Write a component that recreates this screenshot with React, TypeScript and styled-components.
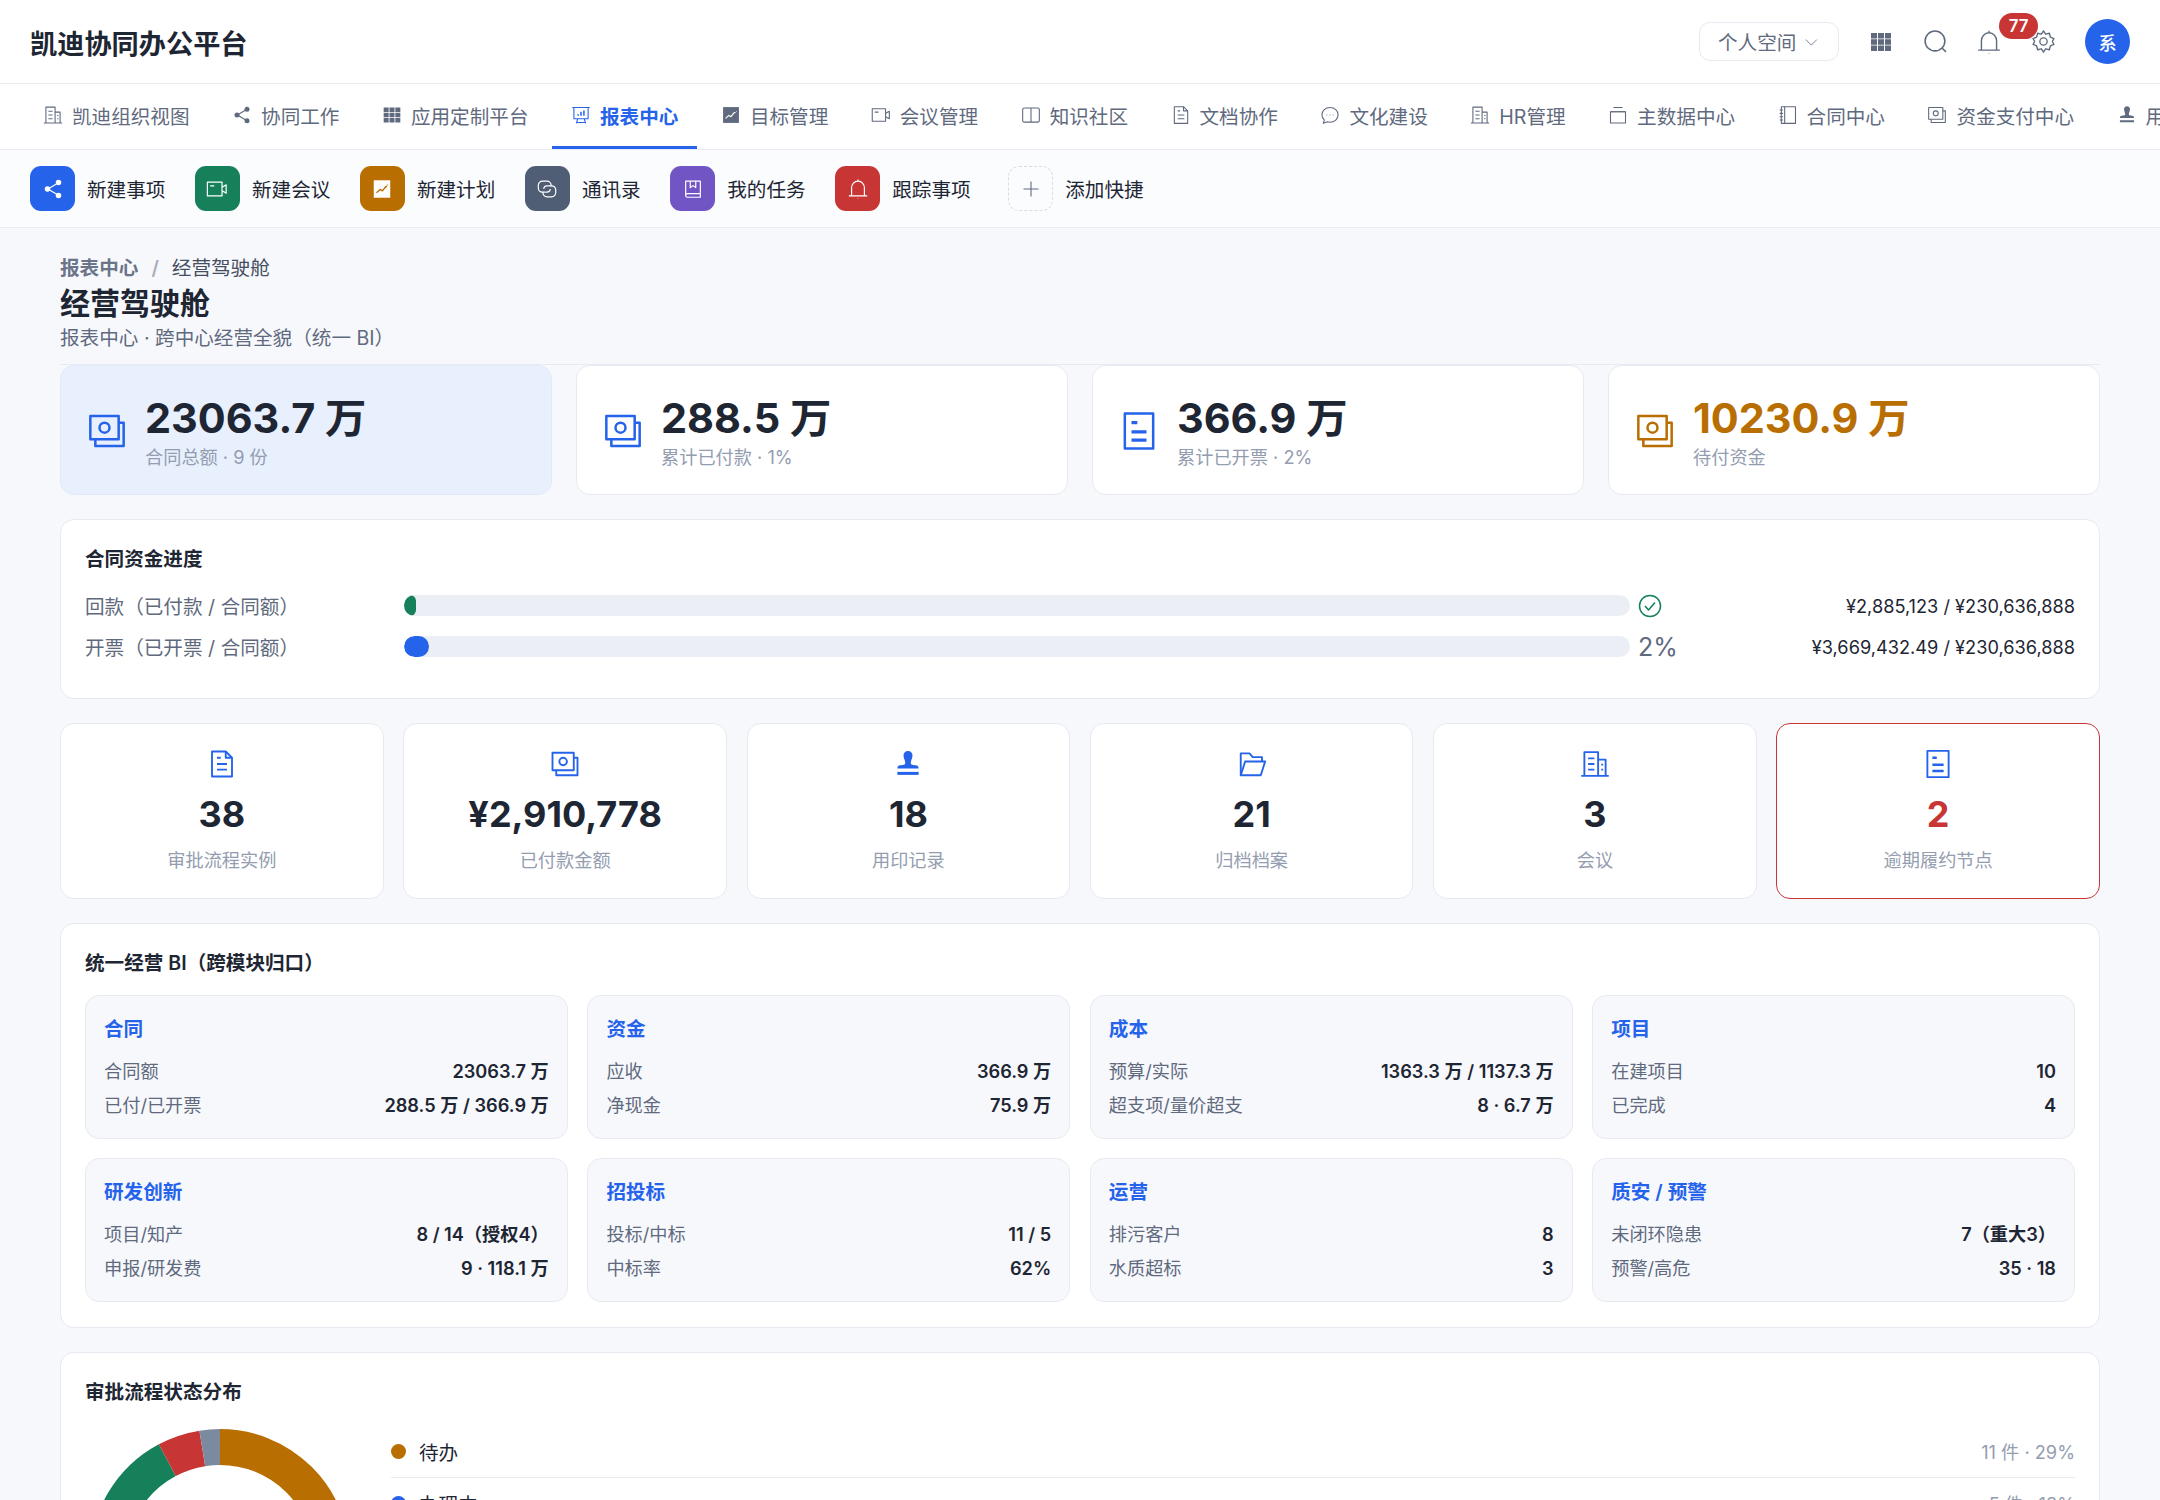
import React from 'react';
import styled, { createGlobalStyle } from 'styled-components';

const BLUE = '#2563eb';
const GREEN = '#15805a';
const ORANGE = '#b86e00';
const RED = '#c73535';
const SLATE = '#4f5d75';
const PURPLE = '#7155c4';
const INK = '#1e2633';
const BODY = '#5f6a7e';
const MUTED = '#949db0';
const LINE = '#e8eaf1';

const GlobalStyle = createGlobalStyle`
    html, body {
        margin: 0;
        height: 100%;
        overflow: hidden;
        background: #f7f8fc;
    }
    * {
        box-sizing: border-box;
    }
    #root {
        height: 100%;
        font-family: Inter, "Noto Sans CJK SC", sans-serif;
        font-size: 19.6px;
        color: ${INK};
    }
`;

const Page = styled.div`
    height: 1500px;
    overflow: hidden;
`;

const Header = styled.header`
    display: flex;
    align-items: center;
    justify-content: space-between;
    height: 84px;
    padding: 0 30px;
    background: #fff;
    border-bottom: 1px solid ${LINE};
`;

const Brand = styled.div`
    font-size: 27.2px;
    font-weight: 600;
    color: ${INK};
`;

const HeaderTools = styled.div`
    display: flex;
    align-items: center;
`;

const SpaceSelect = styled.div`
    display: flex;
    align-items: center;
    gap: 7px;
    width: 140px;
    height: 39px;
    margin-right: 15px;
    padding: 0 18px;
    border: 1px solid ${LINE};
    border-radius: 11px;
    color: ${BODY};
    white-space: nowrap;
`;

const ToolButton = styled.div`
    position: relative;
    display: flex;
    align-items: center;
    justify-content: center;
    width: 54px;
    height: 40px;
    color: ${BODY};
`;

const Badge = styled.span`
    position: absolute;
    top: -9px;
    left: 37px;
    width: 39px;
    height: 26px;
    border-radius: 13px;
    background: ${RED};
    color: #fff;
    font-size: 16.8px;
    font-weight: 600;
    line-height: 26px;
    text-align: center;
`;

const Avatar = styled.div`
    display: flex;
    align-items: center;
    justify-content: center;
    width: 45px;
    height: 45px;
    margin-left: 15px;
    border-radius: 50%;
    background: ${BLUE};
    color: #fff;
    font-size: 18.2px;
    font-weight: 500;
`;

const Nav = styled.nav`
    display: flex;
    gap: 4.5px;
    height: 66px;
    padding-left: 24px;
    overflow: hidden;
    background: #fff;
    border-bottom: 1px solid ${LINE};
`;

const NavItem = styled.div<{ $active?: boolean }>`
    display: flex;
    flex: none;
    align-items: center;
    gap: 9px;
    height: 65px;
    padding: 0 19px;
    border-bottom: 3px solid ${({ $active }) => ($active ? BLUE : 'transparent')};
    color: ${({ $active }) => ($active ? BLUE : BODY)};
    font-weight: ${({ $active }) => ($active ? 600 : 400)};
    white-space: nowrap;
`;

const ShortcutBar = styled.div`
    display: flex;
    align-items: center;
    gap: 29.6px;
    height: 78px;
    padding: 0 30px;
    background: #fbfcfe;
    border-bottom: 1px solid ${LINE};
`;

const Shortcut = styled.div`
    display: flex;
    align-items: center;
    gap: 12px;
    white-space: nowrap;
`;

const AddShortcut = styled(Shortcut)`
    margin-left: 8px;
`;

const ShortcutIcon = styled.div<{ $bg: string }>`
    display: flex;
    align-items: center;
    justify-content: center;
    width: 45px;
    height: 45px;
    border-radius: 11px;
    background: ${({ $bg }) => $bg};
    color: #fff;
`;

const AddIcon = styled(ShortcutIcon)`
    border: 1px dashed #d8dce6;
    color: ${BODY};
`;

const Main = styled.main`
    display: flex;
    flex-direction: column;
    gap: 24px;
    padding: 27px 60px 0;
`;

const PageHead = styled.div`
    padding-bottom: 12px;
    border-bottom: 1px solid ${LINE};
`;

const Crumbs = styled.div`
    display: flex;
    gap: 13px;
    line-height: 27px;
`;

const CrumbLink = styled.span`
    color: #6b7488;
    font-weight: 600;
`;

const CrumbSep = styled.span`
    color: #a8afbd;
    font-weight: 600;
`;

const CrumbCurrent = styled.span`
    color: #454e60;
`;

const PageTitle = styled.h1`
    margin: 0;
    font-size: 30px;
    font-weight: 700;
    line-height: 43px;
`;

const PageSub = styled.div`
    color: ${BODY};
    line-height: 27px;
`;

const StatsWrap = styled.div`
    display: grid;
    grid-template-columns: repeat(4, 1fr);
    gap: 24px;
    margin-top: -24px;
`;

const StatCard = styled.div<{ $hl?: boolean }>`
    display: flex;
    align-items: center;
    gap: 18px;
    height: 130px;
    padding: 0 26px;
    background: ${({ $hl }) => ($hl ? '#e8effd' : '#fff')};
    border: 1px solid ${({ $hl }) => ($hl ? '#e2e9f9' : LINE)};
    border-radius: 14px;
`;

const StatIcon = styled.div<{ $color: string }>`
    display: flex;
    margin-top: 2px;
    color: ${({ $color }) => $color};
`;

const StatValue = styled.div<{ $color?: string }>`
    margin-top: 2px;
    color: ${({ $color }) => $color || INK};
    font-size: 41.4px;
    font-weight: 700;
    line-height: 52px;
`;

const StatLabel = styled.div`
    color: ${MUTED};
    font-size: 18.2px;
    line-height: 26px;
`;

const Card = styled.section`
    padding: 26px 24px 25px;
    background: #fff;
    border: 1px solid ${LINE};
    border-radius: 14px;
`;

const ProgressCard = styled(Card)`
    padding-bottom: 30px;
`;

const CardTitle = styled.h2`
    margin: 0 0 15px;
    font-size: 19.6px;
    font-weight: 600;
    line-height: 27px;
`;

const ProgressTitle = styled(CardTitle)`
    margin-bottom: 12px;
`;

const ProgressRow = styled.div`
    display: grid;
    grid-template-columns: 319px 1226px 1fr;
    align-items: center;
    height: 41.3px;
    color: ${BODY};
`;

const Track = styled.div`
    height: 21px;
    overflow: hidden;
    border-radius: 11px;
    background: #ebeef5;
`;

const Fill = styled.div<{ $color: string }>`
    height: 100%;
    border-radius: 11px;
    background: ${({ $color }) => $color};
`;

const ProgressEnd = styled.div`
    display: flex;
    align-items: center;
    justify-content: space-between;
    padding-left: 8px;
`;

const Percent = styled.span`
    color: ${BODY};
    font-size: 25px;
`;

const OkIcon = styled.span`
    display: flex;
    color: ${GREEN};
`;

const Amount = styled.span`
    color: ${INK};
    font-size: 18.2px;
`;

const MetricRow = styled.div`
    display: grid;
    grid-template-columns: repeat(6, 1fr);
    gap: 19.6px;
`;

const MetricCard = styled.div<{ $alert?: boolean }>`
    display: flex;
    flex-direction: column;
    align-items: center;
    height: 176px;
    padding-top: 25px;
    background: #fff;
    border: 1px solid ${({ $alert }) => ($alert ? RED : LINE)};
    border-radius: 14px;
    color: ${BLUE};
`;

const MetricValue = styled.div<{ $alert?: boolean }>`
    margin-top: 11px;
    color: ${({ $alert }) => ($alert ? RED : INK)};
    font-size: 36px;
    font-weight: 700;
    line-height: 48px;
`;

const MetricLabel = styled.div`
    margin-top: 9px;
    color: ${MUTED};
    font-size: 18.2px;
    line-height: 26px;
`;

const BiGrid = styled.div`
    display: grid;
    grid-template-columns: repeat(4, 1fr);
    gap: 19px 19.6px;
    margin-top: 18px;
`;

const BiCard = styled.div`
    height: 144px;
    padding: 20px 18px 0;
    background: #f7f8fc;
    border: 1px solid ${LINE};
    border-radius: 14px;
`;

const BiTitle = styled.div`
    margin-bottom: 11px;
    color: ${BLUE};
    font-weight: 600;
    line-height: 27px;
`;

const BiRow = styled.div`
    display: flex;
    justify-content: space-between;
    font-size: 18.2px;
    line-height: 34px;
`;

const BiLabel = styled.span`
    color: ${BODY};
`;

const BiValue = styled.span`
    color: ${INK};
    font-weight: 600;
`;

const StatusBody = styled.div`
    display: flex;
    gap: 36px;
    padding-top: 3px;
`;

const DonutBox = styled.div`
    flex: none;
    width: 270px;
`;

const Legend = styled.div`
    flex: 1;
    margin-top: 2px;
`;

const LegendRow = styled.div`
    display: flex;
    align-items: center;
    gap: 13px;
    height: 52px;
    border-bottom: 1px solid ${LINE};
`;

const Dot = styled.span<{ $color: string }>`
    width: 15px;
    height: 15px;
    border-radius: 50%;
    background: ${({ $color }) => $color};
`;

const LegendCount = styled.span`
    margin-left: auto;
    color: ${MUTED};
    font-size: 18.2px;
`;

const StrokeSvg = ({
    size = 20,
    weight = 1.5,
    children,
}: {
    size?: number;
    weight?: number;
    children: React.ReactNode;
}) => (
    <svg
        width={size}
        height={size}
        viewBox="0 0 24 24"
        fill="none"
        stroke="currentColor"
        strokeWidth={weight}
        strokeLinejoin="round"
    >
        {children}
    </svg>
);

const shapes: Record<string, React.ReactNode> = {
    building: (
        <>
            <path d="M1 21.5h22M3.5 21.5V2.5h11v19M14.5 8.5h6v13" />
            <path d="M6.5 7.5h5M6.5 12h5M6.5 16.5h5M17 12.5h1.5M17 16.5h1.5" />
        </>
    ),
    share: (
        <>
            <path d="M17.5 5.5 6.5 12l11 6.5" />
            <circle cx="18" cy="5" r="3" fill="currentColor" stroke="none" />
            <circle cx="6" cy="12" r="3" fill="currentColor" stroke="none" />
            <circle cx="18" cy="19" r="3" fill="currentColor" stroke="none" />
        </>
    ),
    grid: (
        <path
            fill="currentColor"
            stroke="none"
            d="M2 3h6v5.4H2zM9 3h6v5.4H9zM16 3h6v5.4h-6zM2 9.3h6v5.4H2zM9 9.3h6v5.4H9zM16 9.3h6v5.4h-6zM2 15.6h6V21H2zM9 15.6h6V21H9zM16 15.6h6V21h-6z"
        />
    ),
    board: (
        <>
            <path d="M1.5 3h21M3.5 3v13.5h17V3M8 16.5 6.5 22M16 16.5l1.5 5.5M7 21h10" />
            <path d="M8.5 13v-2M12 13V8M15.5 13V6.5" strokeWidth={1.8} />
        </>
    ),
    chart: (
        <>
            <rect x="2.5" y="2.5" width="19" height="19" fill="currentColor" stroke="none" />
            <path d="m5.5 16 4-3.5 2.5 1.5 3.5-4.5 2-.5M18.5 7.5v.5" stroke="#fff" strokeWidth={1.4} />
        </>
    ),
    chartInverse: (
        <>
            <rect x="3" y="2.5" width="18" height="19" fill="currentColor" stroke="none" />
            <path d="m6 16 4-3.5 2.5 1.5 3.5-4.5 1.5-.5M18 7v1" stroke="#b86e00" strokeWidth={1.5} />
        </>
    ),
    video: (
        <>
            <rect x="1.5" y="4.5" width="16" height="15" />
            <path d="M17.5 10 22 7.5v9L17.5 14M4.5 8.5H9" />
        </>
    ),
    book: (
        <>
            <rect x="2" y="3.5" width="20" height="17" rx="2" />
            <path d="M12 3.5v17" />
        </>
    ),
    doc: (
        <>
            <path d="M4 2h11l5 5v15H4z" />
            <path d="M15 2v5h5M8 7h3M8 12h8M8 16.5h8" />
        </>
    ),
    chat: (
        <>
            <path d="M12 3c5.5 0 9.7 3.9 9.7 8.8s-4.2 8.8-9.7 8.8c-1 0-2-.1-3-.4L4 22l1.2-3.8C3.400 16.600 2.300 14.400 2.300 11.800 2.300 6.900 6.500 3 12 3Z" />
            <path d="M8 12h.6M11.700 12h.6M15.400 12h.6" strokeWidth={1.8} />
        </>
    ),
    box: (
        <>
            <path d="M6.500 3h11M3 8h18" />
            <rect x="3" y="8" width="18" height="13.500" />
        </>
    ),
    notebook: (
        <>
            <rect x="4" y="2" width="17" height="20" />
            <path d="M8 2v20M2 6h4M2 10h4M2 14h4M2 18h4" />
        </>
    ),
    money: (
        <>
            <rect x="2" y="3" width="17" height="14" />
            <circle cx="10.500" cy="10" r="3" />
            <path d="M19 7h3v14H5v-4" />
        </>
    ),
    stamp: (
        <>
            <path
                fill="currentColor"
                stroke="none"
                d="M12 1.500c2.400 0 3.600 1.700 3.600 3.700 0 2.400-1.400 3.600-1.400 6 0 1.300 1.200 1.600 3.800 1.800 1.700.2 2.500.7 2.500 2.500H3.500c0-1.800.8-2.300 2.500-2.500 2.600-.2 3.800-.5 3.800-1.800 0-2.400-1.400-3.600-1.400-6 0-2 1.200-3.700 3.600-3.700Z"
            />
            <path d="M3.500 19.500h17" strokeWidth={2.400} />
        </>
    ),
    link: (
        <>
            <path d="M10 15.500H7a4.500 4.500 0 0 1-4.500-4.500V8A4.500 4.500 0 0 1 7 3.500h5A4.500 4.500 0 0 1 16.500 8v1" />
            <path d="M14 8.500h3a4.500 4.500 0 0 1 4.500 4.500v3a4.500 4.500 0 0 1-4.500 4.500h-5A4.500 4.500 0 0 1 7.500 16v-1" />
            <path d="M14 8.500h-2A3.500 3.500 0 0 0 8.500 12M10 15.500h2a3.500 3.500 0 0 0 3.500-3.500" />
        </>
    ),
    taskBook: (
        <>
            <path d="M4 19V3.500h16V21H6a2 2 0 0 1-2-2Zm0 0a2 2 0 0 1 2-2h14" />
            <path d="M9 3.500v7l3-2.200 3 2.200v-7" />
        </>
    ),
    bell: (
        <>
            <path d="M2 19.500h20M5 19.500V11c0-4.200 3-7.500 7-7.500s7 3.300 7 7.500v8.500M12 1.500v2" />
            <path d="M12 22.500v.3" strokeWidth={2} />
        </>
    ),
    plus: <path d="M12 3v18M3 12h18" />,
    chevron: <path d="m4 8.500 8 8 8-8" />,
    search: (
        <>
            <circle cx="11.500" cy="11.500" r="9.500" />
            <path d="m18.500 18.500 3.500 3.500" />
        </>
    ),
    gear: (
        <>
            <path d="M12 1.800 14 5l3.600-.9 1 3.600 3.400 1.500-1.500 2.800 1.500 2.800-3.400 1.500-1 3.600L14 19l-2 3.200L10 19l-3.600.9-1-3.600L2 14.800 3.500 12 2 9.200l3.400-1.500 1-3.600L10 5Z" />
            <circle cx="12" cy="12" r="3.500" />
        </>
    ),
    receipt: (
        <>
            <rect x="3.500" y="1.500" width="17" height="21" />
            <path d="M7.500 7H11M7.500 12.500h9M7.500 17.500h9" strokeWidth={2} />
        </>
    ),
    folder: (
        <>
            <path d="M3 21V3.500h7l2.500 3H20V10" />
            <path d="M3 21h16l3.500-11H6.500Z" />
        </>
    ),
    check: (
        <>
            <circle cx="12" cy="12" r="10.500" />
            <path d="m7 12 3.500 4 6.500-7.500" />
        </>
    ),
};

const Icon = ({ name, size, weight }: { name: string; size?: number; weight?: number }) => (
    <StrokeSvg size={size} weight={weight}>
        {shapes[name]}
    </StrokeSvg>
);

const navItems = [
    { icon: 'building', label: '凯迪组织视图' },
    { icon: 'share', label: '协同工作' },
    { icon: 'grid', label: '应用定制平台' },
    { icon: 'board', label: '报表中心', active: true },
    { icon: 'chart', label: '目标管理' },
    { icon: 'video', label: '会议管理' },
    { icon: 'book', label: '知识社区' },
    { icon: 'doc', label: '文档协作' },
    { icon: 'chat', label: '文化建设' },
    { icon: 'building', label: 'HR管理' },
    { icon: 'box', label: '主数据中心' },
    { icon: 'notebook', label: '合同中心' },
    { icon: 'money', label: '资金支付中心' },
    { icon: 'stamp', label: '用印管理' },
];

const shortcuts = [
    { icon: 'share', label: '新建事项', bg: BLUE },
    { icon: 'video', label: '新建会议', bg: GREEN },
    { icon: 'chartInverse', label: '新建计划', bg: ORANGE },
    { icon: 'link', label: '通讯录', bg: SLATE },
    { icon: 'taskBook', label: '我的任务', bg: PURPLE },
    { icon: 'bell', label: '跟踪事项', bg: RED },
];

const stats = [
    { icon: 'money', value: '23063.7 万', label: '合同总额 · 9 份', color: BLUE, hl: true },
    { icon: 'money', value: '288.5 万', label: '累计已付款 · 1%', color: BLUE },
    { icon: 'receipt', value: '366.9 万', label: '累计已开票 · 2%', color: BLUE },
    { icon: 'money', value: '10230.9 万', label: '待付资金', color: ORANGE, valueColor: ORANGE },
];

const metrics = [
    { icon: 'doc', value: '38', label: '审批流程实例' },
    { icon: 'money', value: '¥2,910,778', label: '已付款金额' },
    { icon: 'stamp', value: '18', label: '用印记录' },
    { icon: 'folder', value: '21', label: '归档档案' },
    { icon: 'building', value: '3', label: '会议' },
    { icon: 'receipt', value: '2', label: '逾期履约节点', alert: true },
];

const biCards = [
    { title: '合同', rows: [['合同额', '23063.7 万'], ['已付/已开票', '288.5 万 / 366.9 万']] },
    { title: '资金', rows: [['应收', '366.9 万'], ['净现金', '75.9 万']] },
    { title: '成本', rows: [['预算/实际', '1363.3 万 / 1137.3 万'], ['超支项/量价超支', '8 · 6.7 万']] },
    { title: '项目', rows: [['在建项目', '10'], ['已完成', '4']] },
    { title: '研发创新', rows: [['项目/知产', '8 / 14（授权4）'], ['申报/研发费', '9 · 118.1 万']] },
    { title: '招投标', rows: [['投标/中标', '11 / 5'], ['中标率', '62%']] },
    { title: '运营', rows: [['排污客户', '8'], ['水质超标', '3']] },
    { title: '质安 / 预警', rows: [['未闭环隐患', '7（重大3）'], ['预警/高危', '35 · 18']] },
];

const statuses = [
    { label: '待办', count: 11, color: ORANGE },
    { label: '办理中', count: 5, color: BLUE },
    { label: '已完成', count: 19, color: GREEN },
    { label: '已驳回', count: 2, color: RED },
    { label: '已撤回', count: 1, color: '#7c8aa0' },
];

const Donut = () => {
    const total = statuses.reduce((sum, s) => sum + s.count, 0);
    const radius = 112;
    const circumference = 2 * Math.PI * radius;
    let offset = 0;
    return (
        <svg width="270" height="270" viewBox="0 0 270 270">
            {statuses.map((s) => {
                const length = (s.count / total) * circumference;
                const circle = (
                    <circle
                        key={s.label}
                        cx="135"
                        cy="135"
                        r={radius}
                        fill="none"
                        stroke={s.color}
                        strokeWidth="36"
                        strokeDasharray={`${length} ${circumference - length}`}
                        strokeDashoffset={-offset}
                        transform="rotate(-90 135 135)"
                    />
                );
                offset += length;
                return circle;
            })}
        </svg>
    );
};

const ProgressLine = ({
    label,
    percent,
    color,
    amount,
    end,
}: {
    label: string;
    percent: number;
    color: string;
    amount: string;
    end: React.ReactNode;
}) => (
    <ProgressRow>
        <span>{label}</span>
        <Track>
            <Fill $color={color} style={{ width: `${percent}%` }} />
        </Track>
        <ProgressEnd>
            {end}
            <Amount>{amount}</Amount>
        </ProgressEnd>
    </ProgressRow>
);

export default function App() {
    return (
        <Page>
            <GlobalStyle />
            <Header>
                <Brand>凯迪协同办公平台</Brand>
                <HeaderTools>
                    <SpaceSelect>
                        个人空间
                        <Icon name="chevron" size={18} weight={1.2} />
                    </SpaceSelect>
                    <ToolButton>
                        <Icon name="grid" size={24} />
                    </ToolButton>
                    <ToolButton>
                        <Icon name="search" size={25} />
                    </ToolButton>
                    <ToolButton>
                        <Icon name="bell" size={26} weight={1.3} />
                        <Badge>77</Badge>
                    </ToolButton>
                    <ToolButton>
                        <Icon name="gear" size={25} weight={1.3} />
                    </ToolButton>
                    <Avatar>系</Avatar>
                </HeaderTools>
            </Header>
            <Nav>
                {navItems.map((item) => (
                    <NavItem key={item.label} $active={item.active}>
                        <Icon name={item.icon} size={20} weight={1.3} />
                        {item.label}
                    </NavItem>
                ))}
            </Nav>
            <ShortcutBar>
                {shortcuts.map((item) => (
                    <Shortcut key={item.label}>
                        <ShortcutIcon $bg={item.bg}>
                            <Icon name={item.icon} size={22} weight={1.3} />
                        </ShortcutIcon>
                        {item.label}
                    </Shortcut>
                ))}
                <AddShortcut>
                    <AddIcon $bg="transparent">
                        <Icon name="plus" size={20} weight={1.3} />
                    </AddIcon>
                    添加快捷
                </AddShortcut>
            </ShortcutBar>
            <Main>
                <PageHead>
                    <Crumbs>
                        <CrumbLink>报表中心</CrumbLink>
                        <CrumbSep>/</CrumbSep>
                        <CrumbCurrent>经营驾驶舱</CrumbCurrent>
                    </Crumbs>
                    <PageTitle>经营驾驶舱</PageTitle>
                    <PageSub>报表中心 · 跨中心经营全貌（统一 BI）</PageSub>
                </PageHead>
                <StatsWrap>
                    {stats.map((s) => (
                        <StatCard key={s.label} $hl={s.hl}>
                            <StatIcon $color={s.color}>
                                <Icon name={s.icon} size={40} />
                            </StatIcon>
                            <div>
                                <StatValue $color={s.valueColor}>{s.value}</StatValue>
                                <StatLabel>{s.label}</StatLabel>
                            </div>
                        </StatCard>
                    ))}
                </StatsWrap>
                <ProgressCard>
                    <ProgressTitle>合同资金进度</ProgressTitle>
                    <ProgressLine
                        label="回款（已付款 / 合同额）"
                        percent={1}
                        color={GREEN}
                        amount="¥2,885,123 / ¥230,636,888"
                        end={
                            <OkIcon>
                                <Icon name="check" size={24} />
                            </OkIcon>
                        }
                    />
                    <ProgressLine
                        label="开票（已开票 / 合同额）"
                        percent={2}
                        color={BLUE}
                        amount="¥3,669,432.49 / ¥230,636,888"
                        end={<Percent>2%</Percent>}
                    />
                </ProgressCard>
                <MetricRow>
                    {metrics.map((m) => (
                        <MetricCard key={m.label} $alert={m.alert}>
                            <Icon name={m.icon} size={30} />
                            <MetricValue $alert={m.alert}>{m.value}</MetricValue>
                            <MetricLabel>{m.label}</MetricLabel>
                        </MetricCard>
                    ))}
                </MetricRow>
                <Card>
                    <CardTitle>统一经营 BI（跨模块归口）</CardTitle>
                    <BiGrid>
                        {biCards.map((c) => (
                            <BiCard key={c.title}>
                                <BiTitle>{c.title}</BiTitle>
                                {c.rows.map(([label, value]) => (
                                    <BiRow key={label}>
                                        <BiLabel>{label}</BiLabel>
                                        <BiValue>{value}</BiValue>
                                    </BiRow>
                                ))}
                            </BiCard>
                        ))}
                    </BiGrid>
                </Card>
                <Card>
                    <CardTitle>审批流程状态分布</CardTitle>
                    <StatusBody>
                        <DonutBox>
                            <Donut />
                        </DonutBox>
                        <Legend>
                            {statuses.map((s) => (
                                <LegendRow key={s.label}>
                                    <Dot $color={s.color} />
                                    {s.label}
                                    <LegendCount>
                                        {s.count} 件 · {Math.round((s.count / 38) * 100)}%
                                    </LegendCount>
                                </LegendRow>
                            ))}
                        </Legend>
                    </StatusBody>
                </Card>
            </Main>
        </Page>
    );
}
